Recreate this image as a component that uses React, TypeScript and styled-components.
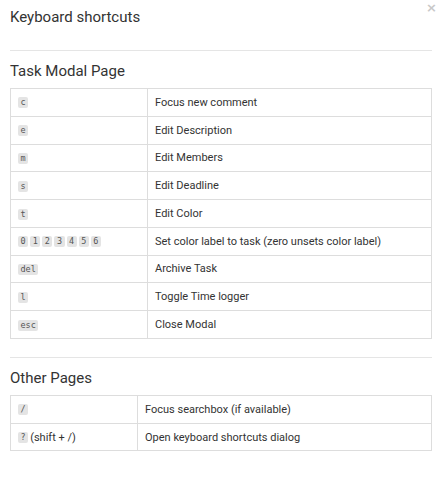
import React from "react";
import styled, { createGlobalStyle } from "styled-components";

const GlobalStyle = createGlobalStyle`
  body {
    margin: 0;
    background: #fff;
    font-family: Roboto, "Liberation Sans", Arial, sans-serif;
    color: #333;
  }
`;

const Modal = styled.div`
  position: relative;
  width: 442px;
  padding: 0 10px;
  box-sizing: border-box;
`;

const Header = styled.div`
  height: 51px;
  border-bottom: 1px solid #e5e5e5;
  box-sizing: border-box;
  padding-top: 7px;
`;

const Title = styled.h1`
  margin: 0;
  font-size: 15px;
  font-weight: 400;
  line-height: 20px;
  color: #333;
`;

const CloseButton = styled.button`
  position: absolute;
  top: 1px;
  right: 5px;
  border: 0;
  background: none;
  padding: 0;
  font-family: "DejaVu Sans", sans-serif;
  font-size: 13px;
  font-weight: 700;
  line-height: 14px;
  color: #c8c8c8;
  cursor: pointer;
`;

const Section = styled.section<{ $divider?: boolean }>`
  padding-top: 10px;
  ${(p) => (p.$divider ? "border-bottom: 1px solid #e5e5e5; padding-bottom: 18px;" : "")}
`;

const Heading = styled.h2`
  margin: 0 0 7px;
  font-size: 15px;
  font-weight: 400;
  line-height: 20px;
  color: #333;
`;

const Table = styled.table`
  width: 100%;
  border-collapse: collapse;
  font-size: 11px;
`;

const Cell = styled.td<{ $width?: number }>`
  border: 1px solid #ddd;
  height: 27.78px;
  padding: 0 7px;
  box-sizing: border-box;
  vertical-align: middle;
  color: #333;
  white-space: nowrap;
  ${(p) => (p.$width ? `width: ${p.$width}px;` : "")}
`;

const Key = styled.kbd`
  display: inline-block;
  background: #e4e4e4;
  border-radius: 2px;
  padding: 0 2.5px;
  margin-right: 2px;
  font-family: "DejaVu Sans Mono", monospace;
  font-size: 8.5px;
  line-height: 11px;
  color: #555;
  vertical-align: middle;
`;

type Shortcut = { keys: string[]; suffix?: string; action: string };

const taskShortcuts: Shortcut[] = [
  { keys: ["c"], action: "Focus new comment" },
  { keys: ["e"], action: "Edit Description" },
  { keys: ["m"], action: "Edit Members" },
  { keys: ["s"], action: "Edit Deadline" },
  { keys: ["t"], action: "Edit Color" },
  { keys: ["0", "1", "2", "3", "4", "5", "6"], action: "Set color label to task (zero unsets color label)" },
  { keys: ["del"], action: "Archive Task" },
  { keys: ["l"], action: "Toggle Time logger" },
  { keys: ["esc"], action: "Close Modal" },
];

const otherShortcuts: Shortcut[] = [
  { keys: ["/"], action: "Focus searchbox (if available)" },
  { keys: ["?"], suffix: "(shift + /)", action: "Open keyboard shortcuts dialog" },
];

const ShortcutTable = ({ rows, keyWidth }: { rows: Shortcut[]; keyWidth: number }) => (
  <Table>
    <tbody>
      {rows.map((row, index) => (
        <tr key={index}>
          <Cell $width={keyWidth}>
            {row.keys.map((k) => (
              <Key key={k}>{k}</Key>
            ))}
            {row.suffix}
          </Cell>
          <Cell>{row.action}</Cell>
        </tr>
      ))}
    </tbody>
  </Table>
);

export default function App() {
  return (
    <>
      <GlobalStyle />
      <Modal>
        <Header>
          <Title>Keyboard shortcuts</Title>
        </Header>
        <CloseButton aria-label="Close">×</CloseButton>
        <Section $divider>
          <Heading>Task Modal Page</Heading>
          <ShortcutTable rows={taskShortcuts} keyWidth={137} />
        </Section>
        <Section>
          <Heading>Other Pages</Heading>
          <ShortcutTable rows={otherShortcuts} keyWidth={127} />
        </Section>
      </Modal>
    </>
  );
}
